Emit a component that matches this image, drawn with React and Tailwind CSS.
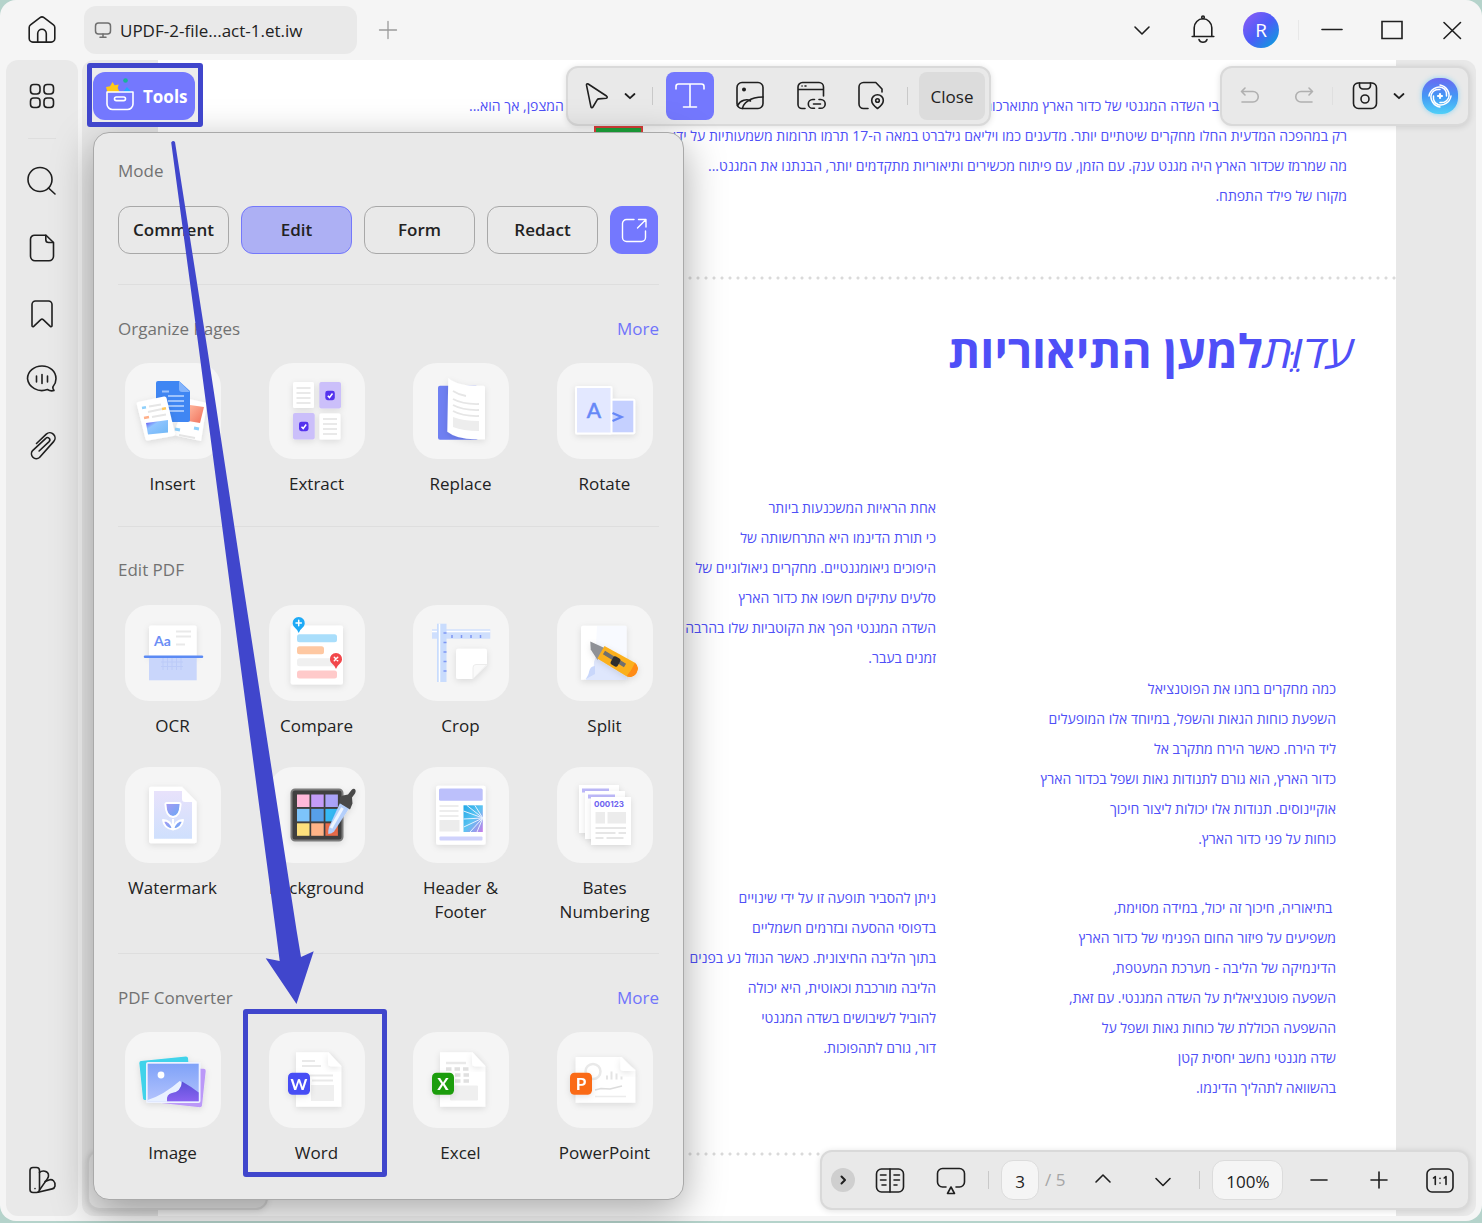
import React from "react";

const INK = "#1f1f1f";

function Icon({ size = 32, width, height, children, stroke = INK, sw = 1.6 }) {
  const w = width || size;
  const h = height || size;
  return (
    <svg
      width={w}
      height={h}
      viewBox={`0 0 ${w} ${h}`}
      fill="none"
      stroke={stroke}
      strokeWidth={sw}
      strokeLinecap="round"
      strokeLinejoin="round"
      className="shrink-0"
      aria-hidden="true"
    >
      {children}
    </svg>
  );
}

function IconButton({ label, className = "", children }) {
  return (
    <button type="button" aria-label={label} className={"flex shrink-0 items-center justify-center " + className}>
      {children}
    </button>
  );
}

/* ---------- title bar ---------- */

function TitleBar() {
  return (
    <header className="flex h-[60px] shrink-0 items-center">
      <IconButton label="Home" className="ml-[26px] size-8">
        <Icon>
          <path d="M4.5 10.8 14 3.6a3.3 3.3 0 0 1 4 0l9.5 7.2a3.2 3.2 0 0 1 1.3 2.600v11.100a3.600 3.600 0 0 1-3.600 3.600H6.800a3.600 3.600 0 0 1-3.600-3.600V13.400a3.200 3.200 0 0 1 1.300-2.600Z" />
          <path d="M11.700 28V19.500a4.300 4.300 0 0 1 8.600 0V28" />
        </Icon>
      </IconButton>
      <button type="button" className="ml-[26px] flex h-12 w-[273px] items-center rounded-xl bg-[#e9e9e9] pl-2.5 text-left">
        <Icon width={18} height={18} stroke="#6f6f6f" sw={1.5}>
          <rect x="1.500" y="2" width="15" height="11" rx="3" />
          <path d="M9 13v3M6 16.200h6" />
        </Icon>
        <span className="mt-0.5 ml-2 text-[17px] text-[#222]">UPDF-2-file...act-1.et.iw</span>
      </button>
      <IconButton label="New tab" className="ml-[21px] size-5">
        <Icon size={20} stroke="#9a9a9a" sw={1.3}>
          <path d="M10 1.500v17M1.500 10h17" />
        </Icon>
      </IconButton>
      <div className="ml-auto flex items-center">
        <IconButton label="Tab list" className="mr-[33px] size-6">
          <Icon size={24}>
            <path d="m5 9 7 7 7-7" />
          </Icon>
        </IconButton>
        <IconButton label="Notifications" className="mr-6 size-8">
          <Icon>
            <circle cx="16" cy="3.300" r="1.300" />
            <path d="M7.200 22.300v-8.500a8.800 9 0 0 1 17.600 0v8.500M5.200 22.500h21.600M12 25.500a4.200 4 0 0 0 8 0" />
          </Icon>
        </IconButton>
        <button
          type="button"
          className="mr-[19px] flex size-9 items-center justify-center rounded-full bg-[linear-gradient(135deg,#8a5cf5_5%,#4c5cf8_50%,#02a8d8_100%)] text-[19px] text-white"
        >
          R
        </button>
        <span className="mr-[21px] h-5 w-px bg-[#e8e8e8]" />
        <IconButton label="Minimize" className="mr-9 size-6">
          <Icon size={24}>
            <path d="M2 11.500h20" />
          </Icon>
        </IconButton>
        <IconButton label="Maximize" className="mr-9 size-6">
          <Icon size={24}>
            <path strokeLinejoin="miter" d="M2 3.500h20v17H2z" />
          </Icon>
        </IconButton>
        <IconButton label="Close window" className="mr-[18px] size-6">
          <Icon size={24}>
            <path d="m4 4.500 16.500 16M20.500 4.500 4 20.500" />
          </Icon>
        </IconButton>
      </div>
    </header>
  );
}

/* ---------- left rail ---------- */

function SideRail() {
  return (
    <nav className="flex w-[72px] shrink-0 flex-col items-center rounded-xl bg-[#e9e9e9] pt-5">
      <IconButton label="Thumbnails" className="size-8">
        <Icon>
          <rect x="4.500" y="4.500" width="9.500" height="9.500" rx="3.200" />
          <rect x="18" y="4.500" width="9.500" height="9.500" rx="3.200" />
          <rect x="4.500" y="18" width="9.500" height="9.500" rx="3.200" />
          <rect x="18" y="18" width="9.500" height="9.500" rx="3.200" />
        </Icon>
      </IconButton>
      <span className="mt-[26px] h-px w-7 bg-[#dedede]" />
      <IconButton label="Search" className="mt-[26px] size-8">
        <Icon>
          <circle cx="14" cy="14.500" r="12" />
          <path d="m22.500 23 6.500 6" />
        </Icon>
      </IconButton>
      <IconButton label="Pages" className="mt-[35px] size-8">
        <Icon>
          <path d="M8.500 3.200H20l7.500 7.300v13.800a4.500 4.500 0 0 1-4.500 4.500H9a4.500 4.500 0 0 1-4.500-4.500V7.200a4 4 0 0 1 4-4Z" />
          <path d="M19.800 3.400v4.300a2.800 2.800 0 0 0 2.800 2.800h4.700" />
        </Icon>
      </IconButton>
      <IconButton label="Bookmarks" className="mt-[34px] size-8">
        <Icon>
          <path d="M6 6.500a3.500 3.500 0 0 1 3.500-3.500h13A3.500 3.500 0 0 1 26 6.500v21c0 1.200-.900 1.500-1.700.800l-7.100-6.600a1.800 1.800 0 0 0-2.400 0l-7.100 6.600C6.900 29 6 28.700 6 27.500Z" />
        </Icon>
      </IconButton>
      <IconButton label="Comments" className="mt-[33px] size-8">
        <Icon>
          <path d="M28 27.500c-2.600.8-5 0-6.600-1A14.400 13 0 0 1 1.500 15.700C1.500 8.500 8 3 16 3s14 5.500 14 12.700c0 3-1.100 5.600-2.900 7.800-.6.900-.3 2.200.9 4Z" />
          <path d="M10.500 13v6M16 11.500v9M21.500 13v6" />
        </Icon>
      </IconButton>
      <IconButton label="Attachments" className="mt-[34px] size-8">
        <Icon>
          <path d="m10.500 14.500 9.800-9.300a5.200 5.200 0 0 1 7.300 7.400L13.500 28.500a4.900 4.900 0 0 1-6.900-6.900L19.800 9.300a2.300 2.300 0 0 1 3.300 3.300l-10 9.400" />
        </Icon>
      </IconButton>
      <IconButton label="Themes" className="mt-auto mb-5 size-8">
        <Icon>
          <rect x="4" y="3.500" width="9.500" height="25" rx="3" />
          <path d="M13.500 8.500c3-2.800 8.500-1.500 9 2.200.3 1.700-.3 3-1.200 4.200L13.500 26" />
          <path d="m19 17.500 4-1.600c3.500-1 6.500 1.200 6 6.100-.3 1.600-1.200 2.500-2.800 2.900L12 28.300M9 24.500v.100" />
        </Icon>
      </IconButton>
    </nav>
  );
}

/* ---------- tool illustrations, drawn on a 96 x 96 tile ---------- */

function Tile({ children }) {
  return (
    <svg width="96" height="96" viewBox="0 0 96 96" aria-hidden="true" className="rounded-3xl bg-[#f5f5f5]">
      <defs>
        <filter id="soft" x="-40%" y="-40%" width="180%" height="180%">
          <feDropShadow dx="0" dy="2" stdDeviation="3" floodColor="#000" floodOpacity="0.11" />
        </filter>
        <linearGradient id="holo" x1="0" y1="0" x2="1" y2="1">
          <stop offset="0" stopColor="#5a3cf0" />
          <stop offset=".35" stopColor="#8fc4ff" />
          <stop offset="1" stopColor="#6fb7f5" />
        </linearGradient>
        <linearGradient id="coral" x1="0" y1="0" x2="1" y2="1">
          <stop offset="0" stopColor="#ffb9a0" />
          <stop offset="1" stopColor="#f0705a" />
        </linearGradient>
        <linearGradient id="paleSheet" x1="0" y1="0" x2="0" y2="1">
          <stop offset="0" stopColor="#e8e2fb" />
          <stop offset="1" stopColor="#cfe0fd" />
        </linearGradient>
        <linearGradient id="petal" x1="0" y1="0" x2="1" y2="1">
          <stop offset="0" stopColor="#a99af3" />
          <stop offset="1" stopColor="#67a9f5" />
        </linearGradient>
        <linearGradient id="sky" x1="0" y1="0" x2="0" y2="1">
          <stop offset="0" stopColor="#7fa2f8" />
          <stop offset="1" stopColor="#b3c3fd" />
        </linearGradient>
        <linearGradient id="dune" x1="0" y1="0" x2="0" y2="1">
          <stop offset="0" stopColor="#5b50d8" />
          <stop offset="1" stopColor="#8a63f0" />
        </linearGradient>
        <linearGradient id="swirl" x1="0" y1="0" x2="1" y2="1">
          <stop offset="0" stopColor="#1fa7e6" />
          <stop offset=".5" stopColor="#5cc4f2" />
          <stop offset="1" stopColor="#c77be8" />
        </linearGradient>
      </defs>
      {children}
    </svg>
  );
}

function Lines({ x, y, w, n, gap = 5, color = "#e3e3e3", sw = 1.8 }) {
  return Array.from({ length: n }, (_, i) => (
    <path key={i} d={`M${x} ${y + i * gap}h${w}`} stroke={color} strokeWidth={sw} />
  ));
}

const InsertArt = () => (
  <Tile>
    <g filter="url(#soft)">
      <path d="M62 35.500 82 40 76 78 48 72Z" fill="#fff" />
    </g>
    <path d="m65 42 14 2-4 16-12-2Z" fill="url(#coral)" />
    <path d="m50 66 5 1M69 65l5 1" stroke="#8fd0fb" strokeWidth="3" />
    <path d="m54 72 16 3" stroke="#e5e5e5" strokeWidth="2" />
    <path d="M33 18h21l11 10v29q0 2-2 2H33q-2 0-2-2V20q0-2 2-2Z" fill="#3f86f3" />
    <path d="M54 18v8q0 3 3 3h8Z" fill="#83b3fb" />
    <Lines x={43} y={33} w={16} n={4} gap={5} color="#9cc2fc" />
    <path d="M37 28.500h7" stroke="#9cc2fc" strokeWidth="2" />
    <g filter="url(#soft)">
      <path d="m13 39 26-5.500q2-.4 2.500 1.500L50 70.500q.3 2-1.700 2.500L23 77.500q-2 .3-2.500-1.500L11.700 41q-.3-1.600 1.300-2Z" fill="#fff" />
    </g>
    <path d="m17 45 4-.8" stroke="#8fd0fb" strokeWidth="2.500" />
    <path d="m24 43.500 12-2M23 49l14-3M27 54l14-2.500" stroke="#e6e6e6" strokeWidth="2" />
    <path d="m37 46 4-.8" stroke="#ffc95e" strokeWidth="2.500" />
    <path d="m19 55 5-1" stroke="#ffb08a" strokeWidth="2.500" />
    <path d="m21 60 22-3v12.500l-20 2Z" fill="url(#holo)" />
  </Tile>
);

const Check = ({ x, y }) => (
  <g>
    <rect x={x} y={y} width="9.500" height="9.500" rx="2.400" fill="#5433ee" />
    <path d={`m${x + 2.5} ${y + 5} 1.700 1.800 3-4`} fill="none" stroke="#fff" strokeWidth="1.500" />
  </g>
);

const ExtractArt = () => (
  <Tile>
    <g filter="url(#soft)">
      <rect x="24" y="19" width="21" height="26" rx="1.500" fill="#fff" />
      <rect x="50.500" y="50.500" width="21" height="26" rx="1.500" fill="#fff" />
      <rect x="50.300" y="19" width="21.700" height="26.500" rx="2" fill="#cbbffa" />
      <rect x="24" y="50" width="21.700" height="26.500" rx="2" fill="#cbbffa" />
    </g>
    <Lines x={27.5} y={25} w={14} n={4} gap={5} color="#e9e9e9" />
    <Lines x={54} y={56} w={14} n={4} gap={5} color="#e9e9e9" />
    <Check x={56.3} y={27.7} />
    <Check x={30} y={58.7} />
  </Tile>
);

const ReplaceArt = () => (
  <Tile>
    <rect x="25" y="22.700" width="40" height="54" rx="2" fill="#6f80f2" />
    <g filter="url(#soft)">
      <path d="M35.300 15c8 7 20 8 35 7.700q1.700 0 1.700 1.500V76.300H62q-18 0-27.700-7.600Z" fill="#fff" />
    </g>
    <path d="M40 28q6 4 13 5M40 36q10 5.500 26 5M40 42q10 5.500 26 5M40 48q10 5.500 26 5" fill="none" stroke="#e6e6e6" strokeWidth="1.800" />
    <path d="M40 54q10 4 26 4v10q-16 0-26-4Z" fill="#ededed" />
  </Tile>
);

const RotateArt = () => (
  <Tile>
    <g filter="url(#soft)">
      <rect x="50" y="35.700" width="28.300" height="35.600" rx="2" fill="#fff" />
      <rect x="52" y="37.700" width="24.300" height="31.600" fill="#c5d0ff" />
      <rect x="18" y="23" width="37.500" height="48.500" rx="2" fill="#fff" />
    </g>
    <rect x="20" y="25" width="33.500" height="44.500" fill="#e3e8ff" />
    <path d="m55.500 50 9 4-9 4" fill="none" stroke="#6688f7" strokeWidth="2.400" />
    <text x="37" y="55" textAnchor="middle" fontSize="21" fontWeight="500" fontFamily="Lato, sans-serif" fill="#6688f7" stroke="#6688f7" strokeWidth=".500">A</text>
  </Tile>
);

const OcrArt = () => (
  <Tile>
    <rect x="24" y="20.500" width="47.700" height="32" rx="2" fill="#fff" filter="url(#soft)" />
    <rect x="24" y="52" width="47.700" height="23.300" fill="#c9d6fb" />
    <path d="M38 53v12M42.500 53v12M47 53v12M51.500 53v12M56 53v12M36 57h22M36 61.500h22" stroke="#bccbf8" strokeWidth="1" />
    <path d="M20 51.700h57" stroke="#5b8af4" strokeWidth="2.500" strokeLinecap="round" />
    <text x="29" y="40.500" fontSize="14" fontWeight="700" fontFamily="Lato, sans-serif" fill="#6b8ef5">Aa</text>
    <path d="M51 26.500h15M51 31.500h15M51 39.500h9" stroke="#e9e9e9" strokeWidth="1.800" />
  </Tile>
);

const Pin = ({ x, y, color, children }) => (
  <g>
    <path d={`M${x} ${y + 10}q-1-3-3.500-5a6.100 6.100 0 1 1 7 0q-2.500 2-3.500 5Z`} fill={color} />
    <g stroke="#fff" strokeWidth="1.500" strokeLinecap="round">{children}</g>
  </g>
);

const CompareArt = () => (
  <Tile>
    <rect x="21.700" y="20.500" width="52.300" height="59" rx="2" fill="#fff" filter="url(#soft)" />
    <rect x="28" y="29.300" width="40" height="8" rx="2.500" fill="#a9defb" />
    <rect x="28" y="41.300" width="27" height="8" rx="2.500" fill="#fec8a2" />
    <rect x="28" y="53.300" width="40" height="8" rx="2.500" fill="#f0f0f0" />
    <rect x="28" y="65.500" width="40" height="8" rx="2.500" fill="#ffcaca" />
    <Pin x={29.7} y={18} color="#1eaaf6">
      <path d="M29.700 15.300v5.400M27 18h5.400" />
    </Pin>
    <Pin x={67} y={54} color="#f2474b">
      <path d="m65.300 52.300 3.400 3.400M68.700 52.300l-3.400 3.400" />
    </Pin>
  </Tile>
);

const CropArt = () => (
  <Tile>
    <rect x="19" y="24.300" width="58.300" height="9.400" fill="#cfdffd" />
    <path d="M19 26.500h58.300" stroke="#fff" strokeWidth="1.500" />
    <path d="M39 30v3M48.500 30v3M58 30v3M67.500 30v3" stroke="#7d96f3" strokeWidth="1.500" />
    <rect x="24" y="18.700" width="9.500" height="58.300" fill="#c9dcfd" />
    <path d="M26.500 18.700V77" stroke="#fff" strokeWidth="1.500" />
    <path d="M30.500 28h3M30.500 37.500h3M30.500 47h3M30.500 56.500h3M30.500 66h3" stroke="#7d96f3" strokeWidth="1.500" />
    <g filter="url(#soft)">
      <path d="M45 43.700h27q2 0 2 2V60L60 74H45q-2 0-2-2V45.700q0-2 2-2Z" fill="#fff" />
    </g>
    <path d="M74 59.500H63q-3 0-3 3V74Z" fill="#fafafa" stroke="#ececec" strokeWidth="1" />
  </Tile>
);

const SplitArt = () => (
  <Tile>
    <g filter="url(#soft)">
      <path d="M26 20.700h14q3 28-2 46l-9 8H24V22.700q0-2 2-2Z" fill="#fff" />
      <path d="M40 20.700h28q1.700 0 1.700 1.700V75H29q1-5 5-8 5-1 4-6Z" fill="#f8faff" />
    </g>
    <path d="M40 48l29.700 18v9H29q1-5 5-8 3-2 3-10Z" fill="#dfe7fd" />
    <path d="M27 75q4-2 5-8t6-6v8Z" fill="#c9d7fb" />
    <g filter="url(#soft)">
      <path d="m33.300 36.500 14.200 6.500-7 12-6.800-10.500Z" fill="#8f9196" />
      <path d="m47.500 41 30 16.500q5 4.500 1.500 10.500-4 5.500-10 3L40.300 53.500Z" fill="#fbb01d" />
      <path d="m78 57.800q5 4.700 1.500 10.500-4 5.500-10 3 5-5.500 8.500-13.500Z" fill="#ff8b12" />
      <path d="m47 47.500 21 13" stroke="#6f6f6f" strokeWidth="4" />
      <rect x="54.500" y="52" width="8" height="9" rx="2" transform="rotate(30 58.500 56.500)" fill="#2f2f2f" />
    </g>
  </Tile>
);

const WatermarkArt = () => (
  <Tile>
    <g filter="url(#soft)">
      <path d="M26 19.700h31L71.700 34.700v39.600q0 2-2 2H26q-2 0-2-2V21.700q0-2 2-2Z" fill="#fff" />
    </g>
    <path d="M29 24h28v8q0 3 3 3h7v36.700H29Z" fill="url(#paleSheet)" />
    <g fill="url(#petal)" stroke="#fff" strokeWidth="2" strokeLinejoin="round">
      <path d="M48 61v-9" />
      <path d="M48 62.500q-9-1-10-9.500 8 .5 10 9.500ZM48 62.500q9-1 10-9.500-8 .500-10 9.500Z" />
      <path d="M42 36h12q2 0 1.500 2-.5 11.500-7.500 12-7-.5-7.500-12-.5-2 1.500-2Z" />
    </g>
  </Tile>
);

const SWATCHES = ["#ffb8da", "#c49cf8", "#aaa3f8", "#7dc4fb", "#579fe8", "#35b9f5", "#fde07c", "#ffb387", "#ee6e4b"];

const BackgroundArt = () => (
  <Tile>
    <rect x="22.500" y="22.500" width="51" height="51" rx="3.500" fill="#404040" stroke="#7b7b7b" strokeWidth="2" filter="url(#soft)" />
    {SWATCHES.map((c, i) => (
      <rect key={c} x={28 + (i % 3) * 14.2} y={27.5 + Math.floor(i / 3) * 14.4} width="12.500" height="12.500" fill={c} />
    ))}
    <g filter="url(#soft)">
      <path d="M71 36 80 41.500 65 64.500q-2 2-5.700 2.500-.3-3.500.7-7Z" fill="#b4cffb" />
      <path d="M73.500 41 62 61" stroke="#eef5ff" strokeWidth="3" />
      <path d="m71 30 3-1.500 5-1 3.500-4.500q2.500-2.500 4 0 .5 1.500-.5 3.500l-3 4 .5 6-2.500 6L70.500 36Z" fill="#4a4a4a" />
    </g>
  </Tile>
);

const HeaderArt = () => (
  <Tile>
    <rect x="23" y="18.700" width="49.700" height="59" rx="2" fill="#fff" filter="url(#soft)" />
    <rect x="26" y="21.500" width="43.700" height="12.200" rx="1.500" fill="#bcc0fb" />
    <Lines x={26.5} y={39} w={19} n={3} gap={5} color="#ededed" />
    <rect x="26.500" y="53" width="20" height="11.500" fill="#ececec" />
    <rect x="50.500" y="38.300" width="19.300" height="26.700" fill="url(#swirl)" />
    <path d="m69.800 51-19.300-7M69.800 51l-16-12.700M69.800 51l-19.300 1M69.800 51l-19 9M69.800 51 57 65M69.800 51 64 65M69.800 51l-8-12.700" fill="none" stroke="#e6f1ff" strokeWidth="1" />
    <rect x="26.500" y="69.500" width="43" height="4" rx="1" fill="#cfd2fc" />
  </Tile>
);

const BatesArt = () => (
  <Tile>
    <rect x="22" y="18" width="40" height="48" fill="#fff" filter="url(#soft)" />
    <path d="M25 21.500h27v4H25z" fill="#bdb9fa" />
    <rect x="28" y="24" width="40" height="48" fill="#fff" filter="url(#soft)" />
    <path d="M31 27.500h27v4H31z" fill="#bdb9fa" />
    <rect x="34" y="30" width="40" height="48" fill="#fff" filter="url(#soft)" />
    <text x="37" y="40" fontSize="8" fontWeight="700" fontFamily="Inter, sans-serif" fill="#6d63f0">
      000123
    </text>
    <path d="M38.500 45H48v11.500h-9.500zM50.500 45H69v11.500H50.500z" fill="#ececec" />
    <path d="M38.500 61H69M38.500 66h20M61.500 66H69M38.500 71h8M49.500 71h17" stroke="#e6e6e6" strokeWidth="2" />
  </Tile>
);

const ImageArt = () => (
  <Tile>
    <g filter="url(#soft)">
      <path d="M16 29 61 24.500q1.700 0 2 1.500l3 38-46 4q-1.500 0-2-1.500L14.300 31Q14.500 29 16 29Z" fill="#40d3ea" />
      <path d="m36 36 43 .700q2 .300 1.700 2.300L77 73.500q-.3 2-2.200 1.800L36 71Z" fill="#bb98f8" />
      <rect x="21" y="30" width="54.500" height="41" rx="2" fill="#eef2ff" />
    </g>
    <rect x="22.700" y="31.700" width="51" height="37.600" fill="url(#sky)" />
    <circle cx="36" cy="43" r="3.400" fill="#fff" />
    <path d="M22.700 68q16-5 32-19 3 1 2 6-2 5-9 6-6 1-5 8.300H22.700Z" fill="#e9f1ff" />
    <path d="M57 49.500q9 5 16.700 11v8.800H42q-1-7 5-8.300 9-1 10-11.500Z" fill="url(#dune)" />
  </Tile>
);

const Badge = ({ x = 19, color, letter, font = 17 }) => (
  <g filter="url(#soft)">
    <rect x={x} y="40.700" width="22" height="22" rx="4.500" fill={color} />
    <text x={x + 11} y="57.500" textAnchor="middle" fontSize={font} fontWeight="700" fontFamily="Lato, sans-serif" fill="#fff">
      {letter}
    </text>
  </g>
);

const Paper = () => (
  <>
    <path d="M27 20.300h32.500L72.300 34v40.700H27Z" fill="#fff" filter="url(#soft)" />
    <path d="M59 20.300v10.500q0 3.500 3.500 3.500h9.800Z" fill="#fff" filter="url(#soft)" />
  </>
);

const WordArt = () => (
  <Tile>
    <Paper />
    <path d="M33 29h13M33 34h19M33 43.500h31M43 48.500h21" stroke="#e9e9e9" strokeWidth="2" />
    <rect x="42" y="53" width="23" height="16" fill="#efefef" />
    <Badge color="#464df5" letter="W" font={16} />
  </Tile>
);

const ExcelArt = () => (
  <Tile>
    <Paper />
    <path d="M33 31h20" stroke="#e9e9e9" strokeWidth="2.500" />
    <path d="M33 37h23M42 43h14M42 49h14" stroke="#e0e0e0" strokeWidth="3.500" strokeDasharray="5.500 3" />
    <rect x="37" y="53.500" width="28" height="15" rx="1" fill="#efefef" />
    <Badge color="#1f9d0a" letter="X" />
  </Tile>
);

const PowerPointArt = () => (
  <Tile>
    <path d="M18.700 25h46L78.300 38v32.700H18.700Z" fill="#fff" filter="url(#soft)" />
    <path d="M63.500 25v10.500q0 3.500 3.500 3.500h11.300Z" fill="#fff" filter="url(#soft)" />
    <circle cx="36" cy="39.500" r="7.500" fill="none" stroke="#e9e9e9" strokeWidth="2.500" />
    <path d="M50 47.500v-4M54.500 47.500v-8M59.500 47.500v-6M64.500 47.500v-3" stroke="#e4e4e4" strokeWidth="2" />
    <path d="m38 58 6-1.500 9 .500 12-3" fill="none" stroke="#dcdcdc" strokeWidth="1.500" />
    <path d="M38 64.500h31" stroke="#ececec" strokeWidth="1.500" />
    <Badge x={13} color="#fa6a17" letter="P" />
  </Tile>
);

/* ---------- tools panel ---------- */

function Tool({ art: Art, label, framed }) {
  return (
    <button type="button" className="relative flex w-36 flex-col items-center text-[17px] leading-6 text-[#222]">
      <Art />
      <span className="mt-[13px] w-28 text-center">{label}</span>
      {framed && (
        <span className="pointer-events-none absolute -top-[23px] right-0.5 -bottom-3 -left-0.5 rounded-[3px] border-[5px] border-[#4046cc]" />
      )}
    </button>
  );
}

function SectionHead({ title, more }) {
  return (
    <div className="flex h-6 items-center justify-between px-6 text-[17px] font-medium">
      <h2 className="text-[#727272]">{title}</h2>
      {more && (
        <a href="#more" className="text-[#7074fb]">
          More
        </a>
      )}
    </div>
  );
}

const Rule = ({ className }) => <hr className={"mx-6 border-[#dedede] " + className} />;

function ModeButton({ label, active }) {
  return (
    <button
      type="button"
      aria-pressed={!!active}
      className={
        "h-12 w-[111px] rounded-xl border text-[17px] font-semibold text-[#222] " +
        (active ? "border-[#7478fb] bg-[#adb0f4]" : "border-[#a8a8a8]")
      }
    >
      {label}
    </button>
  );
}

function ToolsPanel() {
  return (
    <section
      aria-label="Tools"
      className="absolute top-[72px] left-[11px] w-[591px] rounded-2xl border border-[#a9a9a9] bg-[#e9e9e9] pt-[26px] pb-[34px] shadow-[0_12px_40px_rgba(0,0,0,0.34)]"
    >
      <SectionHead title="Mode" />
      <div className="mt-[23px] flex gap-3 px-6">
        <ModeButton label="Comment" />
        <ModeButton label="Edit" active />
        <ModeButton label="Form" />
        <ModeButton label="Redact" />
        <IconButton label="Open in window" className="size-12 rounded-xl bg-[#7478fe]">
          <Icon stroke="#fff" sw={1.4} size={28}>
            <path d="M14 3.500H6.500a4 4 0 0 0-4 4v14a4 4 0 0 0 4 4h15a4 4 0 0 0 4-4V15" />
            <path d="M18.500 3.500h7.500V11M26 3.500 17.500 12" />
          </Icon>
        </IconButton>
      </div>
      <Rule className="mt-[30px]" />
      <div className="mt-8">
        <SectionHead title="Organize Pages" more />
        <div className="mt-[22px] flex justify-center">
          <Tool art={InsertArt} label="Insert" />
          <Tool art={ExtractArt} label="Extract" />
          <Tool art={ReplaceArt} label="Replace" />
          <Tool art={RotateArt} label="Rotate" />
        </div>
      </div>
      <Rule className="mt-[30px]" />
      <div className="mt-[31px]">
        <SectionHead title="Edit PDF" />
        <div className="mt-[23px] flex justify-center">
          <Tool art={OcrArt} label="OCR" />
          <Tool art={CompareArt} label="Compare" />
          <Tool art={CropArt} label="Crop" />
          <Tool art={SplitArt} label="Split" />
        </div>
        <div className="mt-[29px] flex items-start justify-center">
          <Tool art={WatermarkArt} label="Watermark" />
          <Tool art={BackgroundArt} label="Background" />
          <Tool art={HeaderArt} label="Header & Footer" />
          <Tool art={BatesArt} label="Bates Numbering" />
        </div>
      </div>
      <Rule className="mt-[29px]" />
      <div className="mt-8">
        <SectionHead title="PDF Converter" more />
        <div className="mt-[22px] flex justify-center">
          <Tool art={ImageArt} label="Image" />
          <Tool art={WordArt} label="Word" framed />
          <Tool art={ExcelArt} label="Excel" />
          <Tool art={PowerPointArt} label="PowerPoint" />
        </div>
      </div>
    </section>
  );
}

function ToolsButton() {
  return (
    <div className="absolute top-[3px] left-[5px] rounded-[3px] border-[5px] border-[#4046cc] bg-[#ececec] pt-1 pr-[3px] pb-0.5 pl-px">
      <button type="button" className="flex h-12 w-[102px] items-center rounded-xl bg-[#7478fe] pl-3 text-[17px] font-bold text-white">
        <Icon width={30} height={36} stroke="#fff">
          <path d="m7.500 4 2.200 3.200 4-.600-1 3.500 2 4.400H2.500L1 9l4-.800Z" fill="#ffc917" stroke="none" />
          <circle cx="20.500" cy="2.500" r="2.300" fill="#18b39a" stroke="none" />
          <path d="m17.500 14.500 4.500-5.500 5 5.500Z" fill="#24a4ff" stroke="none" />
          <rect x="2" y="14" width="26" height="17.500" rx="5" fill="#7478fe" stroke="none" />
          <path d="M2 14h26v12a5.500 5.500 0 0 1-5.500 5.500h-15A5.500 5.500 0 0 1 2 26Z" />
          <rect x="9.500" y="19" width="11" height="3.600" rx="1.800" />
        </Icon>
        <span className="mt-0.5 ml-2">Tools</span>
      </button>
    </div>
  );
}

/* ---------- floating bars ---------- */

const BAR = "flex h-[60px] items-center rounded-xl border-2 border-[#d9d9d9] bg-[#e9e9e9] shadow-[0_1px_6px_rgba(0,0,0,0.12)]";
const Divider = ({ className = "" }) => <span className={"h-[18px] w-px shrink-0 bg-[#c9c9c9] " + className} />;

function EditBar() {
  return (
    <div className={"absolute top-1.5 left-[484px] w-[425px] pl-3.5 pr-1 " + BAR}>
      <IconButton label="Select" className="size-7">
        <Icon size={28}>
          <path d="M4.500 3.200c-.2-1.200.8-1.700 1.700-1.200l18.300 12c1.200 1 .8 2-.3 2.200l-7.500.7a2 2 0 0 0-1.400.8l-4.400 7.300c-.7 1-1.800.8-2-.4Z" />
        </Icon>
      </IconButton>
      <IconButton label="Select options" className="ml-3 size-4">
        <Icon size={16} sw={1.8}>
          <path d="m3.500 6 4.500 4.200L12.500 6" />
        </Icon>
      </IconButton>
      <Divider className="ml-3.5" />
      <IconButton label="Text" className="ml-[13px] size-12 rounded-lg bg-[#7478fe]">
        <Icon stroke="#fff">
          <path d="M2 9V6.500A2.500 2.500 0 0 1 4.500 4h23A2.500 2.500 0 0 1 30 6.500V9M16 4v23M9.500 27h13" />
        </Icon>
      </IconButton>
      <IconButton label="Image" className="ml-5 size-8">
        <Icon>
          <rect x="3" y="2.500" width="26" height="26" rx="5" />
          <circle cx="10" cy="9.500" r="1.200" fill={INK} />
          <path d="M17 28.500C11.500 28.500 9 28 9 28c1-4 6-10.500 20-11.500M3.500 26c2-5 9-8 13.500-5.500M8.500 28.500c.5-2 1.500-4.500 2-7" stroke="none" />
          <path d="M8.500 28.500C9 24 15 17 29 17M3.500 25.500c3-5.500 9.500-7 13-4.500" />
        </Icon>
      </IconButton>
      <IconButton label="Link" className="ml-[29px] size-8">
        <Icon>
          <path d="M10 28.500H7a4 4 0 0 1-4-4V7a4.500 4.500 0 0 1 4.500-4.500h16.500A4.500 4.500 0 0 1 28.500 7v9M3 9.500h25.500M7 6h.100M10 6h1" />
          <path d="M19.500 19.500h-1.800a4.400 4.400 0 0 0 0 8.800h1.800M24 19.500h1.800a4.400 4.400 0 0 1 0 8.800H24M18.500 24h7" />
        </Icon>
      </IconButton>
      <IconButton label="Location" className="ml-7 size-8">
        <Icon>
          <path d="M13 28.500H8.500A4.500 4.500 0 0 1 4 24V7a4.500 4.500 0 0 1 4.500-4.500h12.300L27 9v3" />
          <path d="M22.500 28.500c-3-2.200-5.800-4.800-5.800-8a5.800 5.800 0 0 1 11.600 0c0 3.200-2.800 5.800-5.800 8Z" />
          <circle cx="22.500" cy="20.500" r="1.800" />
        </Icon>
      </IconButton>
      <Divider className="ml-5" />
      <button type="button" className="ml-auto h-12 w-[66px] rounded-lg bg-[#dcdcdc] pt-0.5 text-[17px] text-[#222]">
        Close
      </button>
    </div>
  );
}

function FileBar() {
  return (
    <div className={"absolute top-1.5 right-1.5 w-[250px] pr-2.5 pl-4 " + BAR}>
      <IconButton label="Undo" className="size-6">
        <Icon size={24} stroke="#b0b0b0">
          <path d="M7 4 3.500 7.500 7 11M3.500 7.500H15a5.200 5.200 0 0 1 0 10.500H4" />
        </Icon>
      </IconButton>
      <IconButton label="Redo" className="ml-[30px] size-6">
        <Icon size={24} stroke="#b0b0b0">
          <path d="M17 4 20.500 7.500 17 11M20.500 7.500H9a5.200 5.200 0 0 0 0 10.500h11" />
        </Icon>
      </IconButton>
      <Divider className="ml-4 opacity-30" />
      <IconButton label="Save" className="ml-4 size-8">
        <Icon>
          <path d="M9 3h14a5 5 0 0 1 4.500 5v15.500a5 5 0 0 1-5 5h-13a5 5 0 0 1-5-5V8A5 5 0 0 1 9 3Z" />
          <path d="M10.500 3v2.500A3.500 3.500 0 0 0 14 9h4a3.500 3.500 0 0 0 3.500-3.500V3" />
          <circle cx="16" cy="19" r="4" />
        </Icon>
      </IconButton>
      <IconButton label="Save options" className="ml-2.5 size-4">
        <Icon size={16} sw={1.8}>
          <path d="m3.500 6 4.500 4.200L12.500 6" />
        </Icon>
      </IconButton>
      <IconButton
        label="AI assistant"
        className="ml-auto size-9 rounded-2xl bg-[linear-gradient(180deg,#6a68f2_0%,#4497f5_50%,#4fd0f8_100%)] shadow-[0_0_5px_rgba(90,200,250,0.7)]"
      >
        <Icon size={28} stroke="#fff" sw={1.5}>
          {[0, 90, 180, 270].map((a) => (
            <path key={a} transform={`rotate(${a} 14 14)`} d="M3 14C4 7.500 11 3.500 16 5.500c3.200 1.400 5 4.500 4.500 8.500" />
          ))}
          <path d="M14 12v4M12 14h4" strokeWidth="2.200" />
        </Icon>
      </IconButton>
    </div>
  );
}

function PageBar() {
  return (
    <div className={"absolute right-1.5 bottom-1.5 w-[650px] pl-[9px] text-[17px] text-[#222] " + BAR}>
      <IconButton label="Collapse" className="size-6 rounded-full bg-[#cfcfcf]">
        <Icon size={16} sw={2}>
          <path d="m6.500 4.500 3.500 3.500-3.500 3.500" />
        </Icon>
      </IconButton>
      <IconButton label="Page layout" className="ml-[19px] size-8">
        <Icon>
          <rect x="2.500" y="5" width="27" height="23" rx="5" />
          <path d="M16 5v23M6.500 11h5.500M6.500 16h5.500M8 21h4M20 11h5.500M20 16h5.500M20 21h3" />
        </Icon>
      </IconButton>
      <IconButton label="Present" className="ml-[29px] size-8">
        <Icon>
          <path d="M11 23H7.500a5 5 0 0 1-5-5V9.500a5 5 0 0 1 5-5h17a5 5 0 0 1 5 5V18a5 5 0 0 1-5 5H21M16 23l3.500 6.500h-7Z" />
        </Icon>
      </IconButton>
      <Divider className="ml-[21px]" />
      <input
        aria-label="Current page"
        defaultValue="3"
        className="ml-3 h-10 w-[38px] rounded-xl border border-[#dcdcdc] bg-[#f5f5f5] pt-0.5 text-center"
      />
      <span className="ml-1.5 text-[#a5a5a5]">/ 5</span>
      <IconButton label="Previous page" className="ml-[26px] size-6">
        <Icon size={24}>
          <path d="m5 14 7-7 7 7" />
        </Icon>
      </IconButton>
      <IconButton label="Next page" className="ml-9 size-6">
        <Icon size={24}>
          <path d="m5 10.500 7 7 7-7" />
        </Icon>
      </IconButton>
      <Divider className="ml-6" />
      <input
        aria-label="Zoom level"
        defaultValue="100%"
        className="ml-3 h-10 w-[71px] rounded-xl border border-[#dcdcdc] bg-[#f5f5f5] pt-0.5 text-center"
      />
      <IconButton label="Zoom out" className="ml-6 size-6">
        <Icon size={24}>
          <path d="M4 12h16" />
        </Icon>
      </IconButton>
      <IconButton label="Zoom in" className="ml-9 size-6">
        <Icon size={24}>
          <path d="M4 12h16M12 4v16" />
        </Icon>
      </IconButton>
      <IconButton label="Actual size" className="ml-auto mr-3 size-8">
        <Icon>
          <rect x="3" y="5" width="26" height="23" rx="5" />
          <path d="m9.500 14 1.800-1.500v8M20.200 14l1.800-1.500v8M16 14.300v.1M16 19v.100" />
        </Icon>
      </IconButton>
    </div>
  );
}

/* ---------- document ---------- */

const Dots = ({ className = "" }) => (
  <div className={"h-1 bg-[radial-gradient(circle,#dadada_1px,transparent_2px)] bg-[length:8px_4px] " + className} />
);

function TextLines({ lines, className = "" }) {
  return (
    <p className={className}>
      {lines.map((l) => (
        <span key={l} className="block whitespace-nowrap">
          {l}
        </span>
      ))}
    </p>
  );
}

function DocumentPages() {
  return (
    <article
      dir="rtl"
      lang="he"
      className="mr-20 ml-[76px] h-full bg-white font-['Open_Sans','Noto_Sans',sans-serif] text-[14px] leading-[30px] text-[#4f4ff7]"
    >
      <section className="pt-[31px] pr-[49px]">
        <div className="mr-32 ml-[311px] flex justify-between whitespace-nowrap">
          <span>בי השדה המגנטי של כדור הארץ מתוארכות</span>
          <span>המצפן, אך הוא...</span>
        </div>
        <TextLines
          lines={[
            "רק במהפכה המדעית החלו מחקרים שיטתיים יותר. מדענים כמו ויליאם גילברט במאה ה-17 תרמו תרומות משמעותיות על ידי",
            "מה שמרמז שכדור הארץ היה מגנט ענק. עם הזמן, עם פיתוח מכשירים ותיאוריות מתקדמים יותר, הבנתנו את המגנט...",
            "מקורו של פילד התפתח.",
          ]}
        />
      </section>
      <Dots className="mt-[65px]" />
      <section className="pt-10">
        <h1 className="pr-[42px] text-[46px] leading-[60px] font-bold whitespace-nowrap">
          <span className="font-normal italic">עדוֵּת</span>למען התיאוריות
        </h1>
        <div className="mt-[113px] flex pr-[60px]">
          <div className="w-[400px] pt-[181px]">
            <TextLines
              lines={[
                "כמה מחקרים בחנו את הפוטנציאל",
                "השפעת כוחות הגאות והשפל, במיוחד אלו המופעלים",
                "ליד הירח. כאשר הירח מתקרב אל",
                "כדור הארץ, הוא גורם לתנודות גאות ושפל בכדור הארץ",
                "אוקיינוסים. תנודות אלו יכולות ליצור חיכוך",
                "כוחות על פני כדור הארץ.",
              ]}
            />
            <TextLines
              className="mt-[39px]"
              lines={[
                "\u00a0בתיאוריה, חיכוך זה יכול, במידה מסוימת,",
                "משפיעים על פיזור החום הפנימי של כדור הארץ",
                "הדינמיקה של הליבה - מערכת המעטפת,",
                "השפעה פוטנציאלית על השדה המגנטי. עם זאת,",
                "ההשפעה הכוללת של כוחות גאות ושפל על",
                "שדה מגנטי נחשב יחסית קטן",
                "בהשוואה לתהליך הדינמו.",
              ]}
            />
          </div>
          <div className="w-[400px]">
            <TextLines
              lines={[
                "אחת הראיות המשכנעות ביותר",
                "כי תורת הדינמו היא התרחשותה של",
                "היפוכים גיאומגנטיים. מחקרים גיאולוגיים של",
                "סלעים עתיקים חשפו את כדור הארץ",
                "השדה המגנטי הפך את הקוטביות שלו בהרבה",
                "זמנים בעבר.",
              ]}
            />
            <TextLines
              className="mt-[210px]"
              lines={[
                "ניתן להסביר תופעה זו על ידי שינויים",
                "בדפוסי ההסעה ובזרמים חשמליים",
                "בתוך הליבה החיצונית. כאשר הנוזל נע בפנים",
                "הליבה מורכבת וכאוטית, היא יכולה",
                "להוביל לשיבושים בשדה המגנטי",
                "דור, גורם לתהפוכות.",
              ]}
            />
          </div>
        </div>
      </section>
      <Dots className="mt-[49px]" />
    </article>
  );
}

/* Pointer that runs from the Tools button to the Word converter. */
function GuideArrow() {
  return (
    <svg
      width="152"
      height="870"
      viewBox="0 0 152 870"
      className="pointer-events-none absolute top-20 left-[90px] overflow-visible"
      aria-hidden="true"
    >
      <path
        d="M-.8 2.500Q1 0 3 2L35.500 210 72 450 124.500 790 129 817 141.700 811.300 124.500 864 93.700 818.300 107.700 821 103.700 790 58.500 450 27 210Z"
        fill="#4046cc"
      />
    </svg>
  );
}

export default function App() {
  return (
    <div className="flex min-h-screen flex-col bg-[#b5d3cb] pb-0.5 font-['Open_Sans','Noto_Sans',sans-serif]">
      <div className="flex flex-1 flex-col rounded-2xl bg-[#f5f5f5] pb-[5px]">
        <TitleBar />
        <div className="flex flex-1 gap-1 px-1.5">
          <SideRail />
          <main className="relative min-w-0 flex-1">
            <div className="h-full overflow-hidden rounded-xl bg-[#e8e8e8]">
              <DocumentPages />
            </div>
            <div className="absolute top-[66px] left-[512px] h-10 w-[49px] border-2 border-[#e0413c] bg-[#1ea63c]" />
            <div className={"absolute bottom-1.5 left-[5px] w-[181px] " + BAR} />
            <EditBar />
            <FileBar />
            <ToolsPanel />
            <ToolsButton />
            <PageBar />
            <GuideArrow />
          </main>
        </div>
      </div>
    </div>
  );
}
